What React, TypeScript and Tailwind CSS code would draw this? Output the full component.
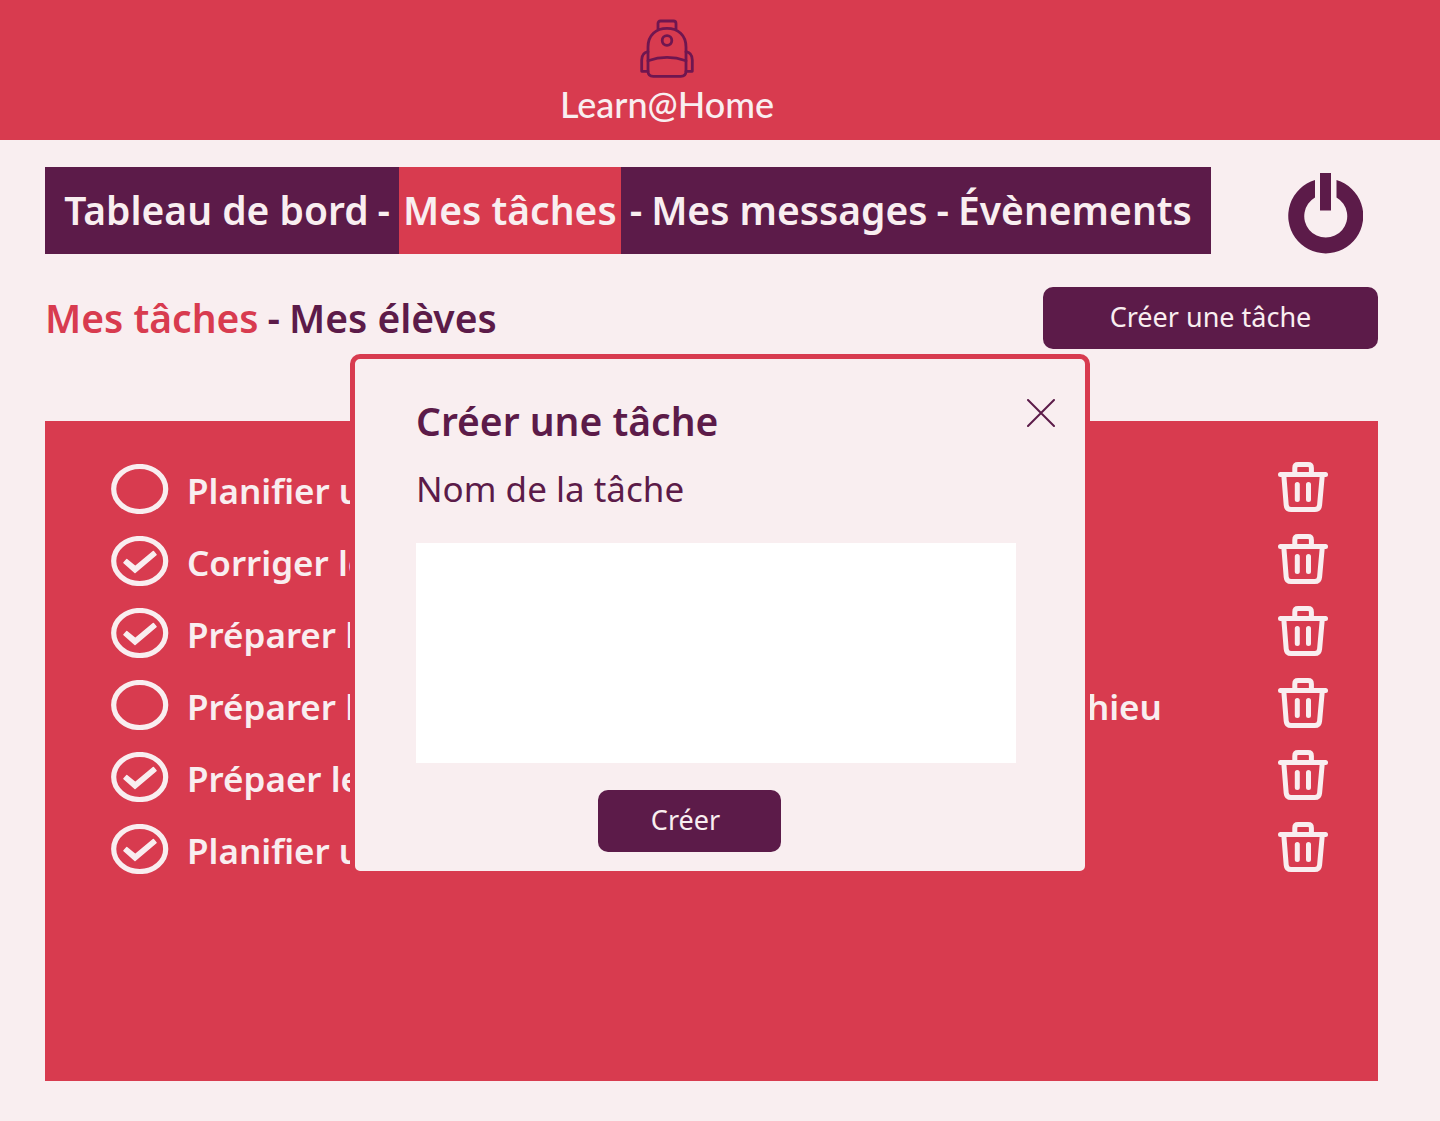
import { useState } from "react";

type Task = { id: number; label: string; done: boolean };

const initialTasks: Task[] = [
  { id: 1, label: "Planifier une réunion", done: false },
  { id: 2, label: "Corriger les exercices", done: true },
  { id: 3, label: "Préparer le contrôle", done: true },
  { id: 4, label: "Préparer les prochaines séances de soutien avec Mathieu", done: false },
  { id: 5, label: "Prépaer les fiches", done: true },
  { id: 6, label: "Planifier un rendez-vous", done: true },
];

function BackpackIcon() {
  return (
    <svg width="54" height="60" viewBox="0 0 54 60" fill="none" stroke="#6f1650" strokeWidth="2.800" strokeLinecap="round" strokeLinejoin="round" aria-hidden="true">
      <path d="M18 10V4.500Q18 2 20.500 2H33.500Q36 2 36 4.500V10" />
      <path d="M8 28C8 16 16 9.300 27 9.300S46 16 46 28V52Q46 57.300 40.700 57.300H13.300Q8 57.300 8 52Z" />
      <path d="M8 41.700Q27 35 46 41.700" />
      <circle cx="27" cy="21.500" r="4.800" />
      <path d="M8 32.700Q1.700 34 1.700 41V52.300H8M46 32.700Q52.300 34 52.300 41V52.300H46" />
    </svg>
  );
}

function PowerIcon() {
  return (
    <svg width="75" height="87" viewBox="0 -6 75 87" fill="currentColor" aria-hidden="true">
      <path d="M27 7A37.500 37.500 0 1 0 48.500 7V24.500A21.500 21.500 0 1 1 27 24.500Z" />
      <path d="M32 0H43V37.500H32Z" />
    </svg>
  );
}

function TrashIcon() {
  return (
    <svg width="50" height="54" viewBox="0 0 50 54" fill="none" stroke="currentColor" strokeWidth="5" strokeLinecap="round" strokeLinejoin="round" aria-hidden="true">
      <path d="M2.500 12.500H47.500" />
      <path d="M16.800 12V6Q16.800 2.600 20 2.600H30.200Q33.400 2.600 33.400 6V12" />
      <path d="M5.800 13L8.200 43Q8.600 47.600 13 47.600H36.800Q41.200 47.600 41.600 43L44.300 13" />
      <path d="M19.300 22.500V37.500M30.500 22.500V37.500" />
    </svg>
  );
}

function TaskRow({ task, onToggle, onDelete }: { task: Task; onToggle: () => void; onDelete: () => void }) {
  return (
    <li className="flex h-[72px] items-center justify-between">
      <label className="flex items-center gap-[18px] whitespace-nowrap text-[35px] font-semibold">
        <input type="checkbox" className="sr-only" checked={task.done} onChange={onToggle} />
        <svg width="58" height="50" viewBox="0 0 58 50" fill="none" aria-hidden="true">
          <ellipse cx="28.700" cy="25" rx="26" ry="22.500" stroke="currentColor" strokeWidth="5.200" />
          {task.done && (
            <path d="M13 26.700L24 36.300L45 18.700L42.300 15.500L24.300 30.700L15.700 23.700Z" fill="currentColor" stroke="currentColor" strokeWidth="1.600" strokeLinejoin="round" />
          )}
        </svg>
        <span className="pt-1">{task.label}</span>
      </label>
      <button type="button" aria-label="Supprimer la tâche" onClick={onDelete}>
        <TrashIcon />
      </button>
    </li>
  );
}

export default function App() {
  const [tasks, setTasks] = useState(initialTasks);
  const [open, setOpen] = useState(true);
  const [name, setName] = useState("");

  const toggle = (id: number) => setTasks(tasks.map((t) => (t.id === id ? { ...t, done: !t.done } : t)));
  const remove = (id: number) => setTasks(tasks.filter((t) => t.id !== id));

  return (
    <div className="relative flex min-h-screen flex-col bg-[#f9eef0] font-['Noto_Sans',sans-serif] text-[#5c1b49]">
      <header className="flex h-[140px] flex-col items-center bg-[#d83b4f] pt-[19px] pr-[106px]">
        <BackpackIcon />
        <p className="font-['Lato',sans-serif] text-4xl leading-[50px] font-medium text-[#f9eef0]">Learn@Home</p>
      </header>

      <main className="flex flex-1 flex-col pt-[27px] pr-[62px] pb-10 pl-[45px]">
        <div className="flex items-center justify-between gap-[77px] pr-[15px]">
          <nav aria-label="Navigation principale" className="flex h-[87px] flex-1 items-stretch justify-center whitespace-nowrap bg-[#5c1b49] text-[39px] font-semibold text-[#f9eef0]">
            <a href="#tableau" className="flex items-center">Tableau de bord</a>
            <span className="flex items-center px-[9px]">-</span>
            <a href="#taches" aria-current="page" className="flex items-center bg-[#d83b4f] px-1">Mes tâches</a>
            <span className="flex items-center px-[9px]">-</span>
            <a href="#messages" className="flex items-center">Mes messages</a>
            <span className="flex items-center px-[9px]">-</span>
            <a href="#evenements" className="flex items-center">Évènements</a>
          </nav>
          <button type="button" aria-label="Se déconnecter">
            <PowerIcon />
          </button>
        </div>

        <div className="mt-[33px] flex items-center justify-between">
          <nav aria-label="Listes de tâches" className="flex gap-[9px] whitespace-nowrap text-[39px] leading-[62px] font-semibold">
            <a href="#mes-taches" aria-current="page" className="text-[#d83b4f]">Mes tâches</a>
            <span>-</span>
            <a href="#mes-eleves">Mes élèves</a>
          </nav>
          <button type="button" onClick={() => setOpen(true)} className="h-[62px] w-[335px] rounded-[10px] bg-[#5c1b49] pb-0.5 text-[27px] text-[#f9eef0]">
            Créer une tâche
          </button>
        </div>

        <ul className="mt-[72px] flex-1 bg-[#d83b4f] pt-8 pr-[50px] pl-[66px] text-[#f9eef0]">
          {tasks.map((task) => (
            <TaskRow key={task.id} task={task} onToggle={() => toggle(task.id)} onDelete={() => remove(task.id)} />
          ))}
        </ul>
      </main>

      {open && (
        <div className="absolute inset-x-0 top-[354px] flex justify-center">
          <form
            role="dialog"
            aria-labelledby="dialog-title"
            onSubmit={(e) => e.preventDefault()}
            className="flex w-[740px] flex-col rounded-[10px] border-[5px] border-[#d83b4f] bg-[#f9eef0] pt-8 pr-[30px] pb-[19px] pl-[61px]"
          >
            <div className="flex items-start justify-between">
              <h2 id="dialog-title" className="text-[39px] leading-[60px] font-semibold">Créer une tâche</h2>
              <button type="button" aria-label="Fermer" onClick={() => setOpen(false)} className="pt-2">
                <svg width="28" height="28" viewBox="0 0 28 28" fill="none" stroke="currentColor" strokeWidth="2" strokeLinecap="round" aria-hidden="true">
                  <path d="M1 1L27 27M27 1L1 27" />
                </svg>
              </button>
            </div>
            <label htmlFor="task-name" className="mt-2.5 text-[35px] leading-[56px]">Nom de la tâche</label>
            <textarea
              id="task-name"
              value={name}
              onChange={(e) => setName(e.target.value)}
              className="mt-[26px] h-[220px] w-[600px] resize-none bg-white p-4 text-2xl outline-none"
            />
            <button type="submit" className="mt-[27px] ml-[182px] h-[62px] w-[183px] rounded-[10px] bg-[#5c1b49] pr-2 pb-0.5 text-[27px] text-[#f9eef0]">
              Créer
            </button>
          </form>
        </div>
      )}
    </div>
  );
}
